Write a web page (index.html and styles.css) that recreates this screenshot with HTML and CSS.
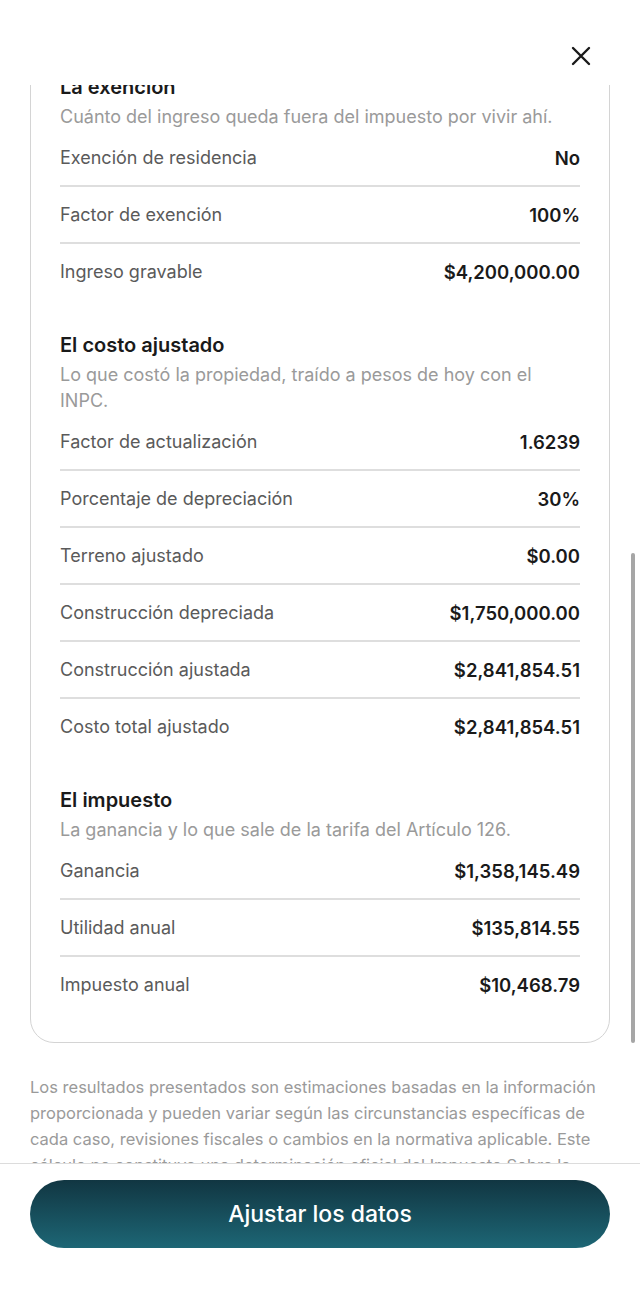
FILE: index.html
```html
<!DOCTYPE html>
<html lang="es">
<head>
    <meta charset="UTF-8">
    <meta name="viewport" content="width=device-width, initial-scale=1.0">
    <title>Resultado del cálculo</title>
    <link rel="stylesheet" href="styles.css">
</head>
<body>
    <div class="topbar">
        <button class="close" aria-label="Cerrar">
            <svg width="20" height="20" viewBox="0 0 20 20">
                <path d="M2 2 L18 18 M18 2 L2 18" stroke="#1a1a1a" stroke-width="2.4" stroke-linecap="round" fill="none"/>
            </svg>
        </button>
    </div>

    <div class="scroll">
        <div class="content">
            <div class="card">
                <div class="section">
                    <h3>La exención</h3>
                    <p class="hint">Cuánto del ingreso queda fuera del impuesto por vivir ahí.</p>
                    <div class="row"><span>Exención de residencia</span><b>No</b></div>
                    <div class="row"><span>Factor de exención</span><b>100%</b></div>
                    <div class="row"><span>Ingreso gravable</span><b>$4,200,000.00</b></div>
                </div>

                <div class="section">
                    <h3>El costo ajustado</h3>
                    <p class="hint">Lo que costó la propiedad, traído a pesos de hoy con el INPC.</p>
                    <div class="row"><span>Factor de actualización</span><b>1.6239</b></div>
                    <div class="row"><span>Porcentaje de depreciación</span><b>30%</b></div>
                    <div class="row"><span>Terreno ajustado</span><b>$0.00</b></div>
                    <div class="row"><span>Construcción depreciada</span><b>$1,750,000.00</b></div>
                    <div class="row"><span>Construcción ajustada</span><b>$2,841,854.51</b></div>
                    <div class="row"><span>Costo total ajustado</span><b>$2,841,854.51</b></div>
                </div>

                <div class="section">
                    <h3>El impuesto</h3>
                    <p class="hint">La ganancia y lo que sale de la tarifa del Artículo 126.</p>
                    <div class="row"><span>Ganancia</span><b>$1,358,145.49</b></div>
                    <div class="row"><span>Utilidad anual</span><b>$135,814.55</b></div>
                    <div class="row"><span>Impuesto anual</span><b>$10,468.79</b></div>
                </div>
            </div>

            <p class="disclaimer">Los resultados presentados son estimaciones basadas en la información proporcionada y pueden variar según las circunstancias específicas de cada caso, revisiones fiscales o cambios en la normativa aplicable. Este cálculo no constituye una determinación oficial del Impuesto Sobre la Renta.</p>
        </div>
        <div class="scrollbar"></div>
    </div>

    <div class="footer">
        <button class="primary">Ajustar los datos</button>
    </div>
</body>
</html>
```

FILE: styles.css
```css
body {
    font-family: Inter, "Noto Sans", sans-serif;
    margin: 0;
    width: 640px;
    height: 1313px;
    display: flex;
    flex-direction: column;
    background-color: #fff;
    color: #1a1a1a;
}

.topbar {
    height: 85px;
    flex-shrink: 0;
    display: flex;
    justify-content: flex-end;
    align-items: flex-start;
    padding: 46px 49px 0 0;
    box-sizing: border-box;
}

.close {
    border: none;
    background: none;
    padding: 0;
    width: 20px;
    height: 20px;
}

.scroll {
    flex: 1;
    overflow: hidden;
    position: relative;
}

.content {
    padding: 0 30px;
    margin-top: -43px;
}

.card {
    border: 1px solid #d4d4d4;
    border-radius: 24px;
    padding: 30px 29px 30px;
}

.section + .section {
    margin-top: 32px;
}

h3 {
    margin: 0 0 3px;
    font-size: 20px;
    font-weight: 600;
    line-height: 28px;
    color: #1a1a1a;
}

.hint {
    margin: 0;
    font-size: 18px;
    line-height: 26px;
    color: #9a9a9a;
}

.row {
    display: flex;
    justify-content: space-between;
    align-items: center;
    height: 55px;
    border-bottom: 2px solid #dedede;
    font-size: 18px;
}

.row:last-child {
    border-bottom: none;
}

.row span {
    color: #5a5a5a;
}

.row b {
    font-weight: 600;
    font-size: 18.5px;
    color: #1a1a1a;
}

.disclaimer {
    margin: 31px 0 0;
    font-size: 16.5px;
    line-height: 26px;
    color: #9a9a9a;
}

.scrollbar {
    position: absolute;
    right: 5px;
    top: 468px;
    width: 4px;
    height: 490px;
    border-radius: 2px;
    background-color: #a6a6a6;
}

.footer {
    flex-shrink: 0;
    height: 150px;
    border-top: 1px solid #dcdcdc;
    padding: 16px 30px 0;
    box-sizing: border-box;
}

.primary {
    width: 100%;
    height: 68px;
    border: none;
    border-radius: 34px;
    background: linear-gradient(to bottom, #113642, #1d6675);
    color: #fff;
    font-family: Inter, "Noto Sans", sans-serif;
    font-size: 23px;
    font-weight: 500;
}
```
